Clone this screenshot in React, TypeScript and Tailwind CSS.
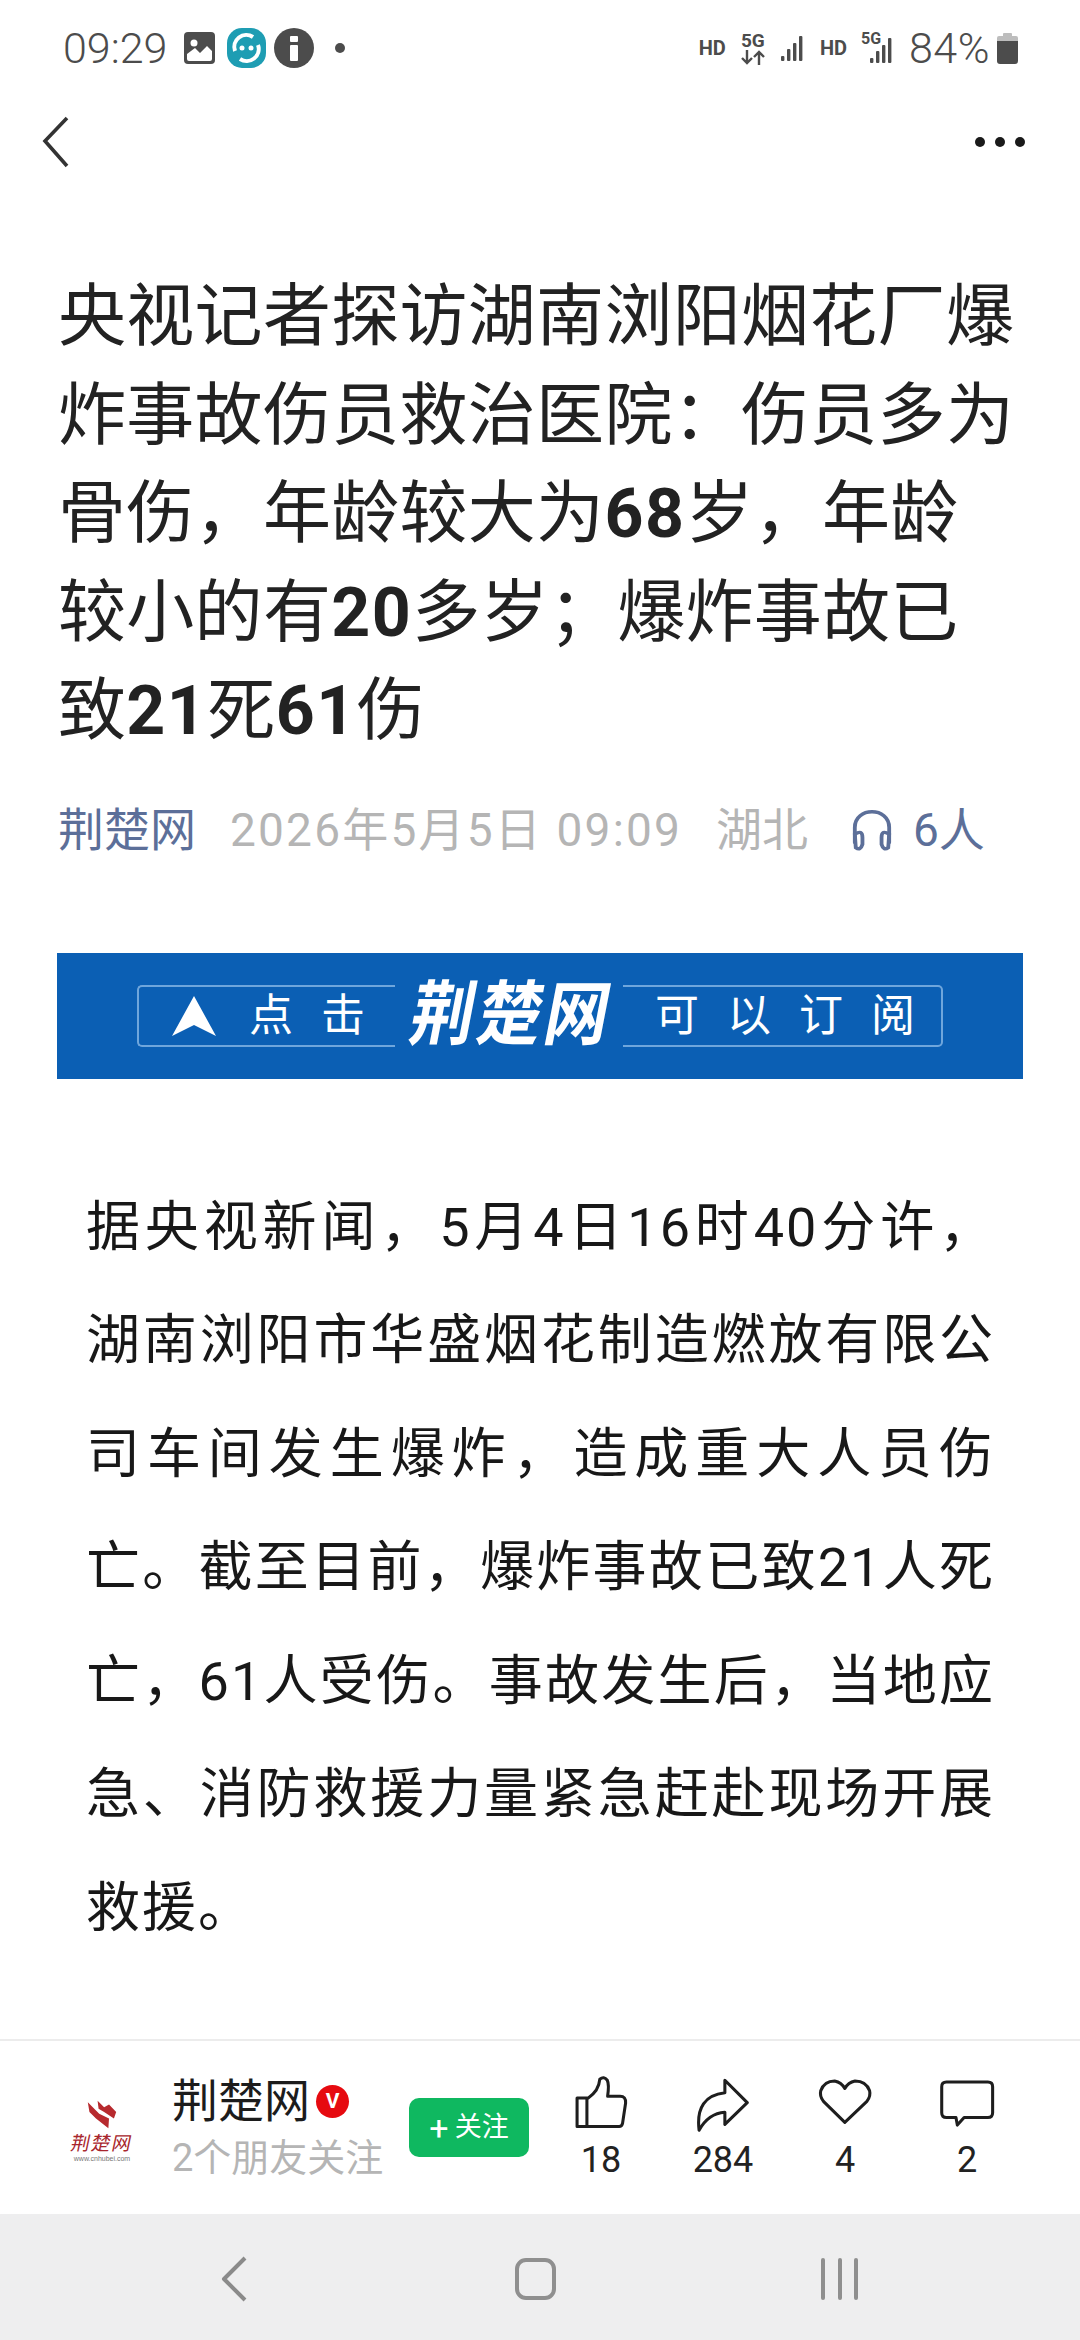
// App.tsx
const font = "font-['Roboto','Noto_Sans_CJK_SC',sans-serif]";

function SignalBars({ x = 0 }: { x?: number }) {
  const bars = [
    [0, 20, 3],
    [6, 13, 10],
    [12, 7, 16],
    [18, 0, 23],
  ];
  return (
    <svg width="27" height="26" viewBox="0 0 27 26" fill="#4c4c4c" style={{ marginLeft: x }}>
      {bars.map(([bx, by, h]) => (
        <rect key={bx} x={bx + 1} y={by + 1} width="3.4" height={h + 2} rx="1" />
      ))}
    </svg>
  );
}

function StatusBar() {
  return (
    <div className="flex h-[96px] shrink-0 items-center pl-[63px] pr-[62px] text-[#4c4c4c]">
      <span className="w-[121px] text-[43px] font-light leading-none">09:29</span>
      <svg width="31" height="32" viewBox="0 0 31 32" className="mr-[12px]">
        <rect width="31" height="32" rx="4" fill="#4c4c4c" />
        <circle cx="10" cy="11" r="3.5" fill="#fff" />
        <path d="M3 27 V22 L11 16 L16 21 L23 14 L28 19 V27 Q28 29 26 29 H5 Q3 29 3 27Z" fill="#fff" />
      </svg>
      <svg width="39" height="40" viewBox="0 0 39 40" className="mr-[8px]">
        <rect width="39" height="40" rx="15" fill="#1e9db3" />
        <path d="M8 23 A12 12 0 0 1 26 9" fill="none" stroke="#fff" strokeWidth="4" />
        <path d="M31 17 A12 12 0 0 1 13 31" fill="none" stroke="#fff" strokeWidth="4" />
        <circle cx="15" cy="20" r="2.5" fill="#fff" />
        <circle cx="24" cy="20" r="2.5" fill="#fff" />
      </svg>
      <svg width="40" height="40" viewBox="0 0 40 40">
        <circle cx="20" cy="20" r="20" fill="#4c4c4c" />
        <rect x="16" y="8" width="8" height="6" rx="1" fill="#fff" />
        <rect x="16" y="17" width="8" height="16" rx="1" fill="#fff" />
      </svg>
      <span className="ml-[21px] h-[10px] w-[10px] rounded-full bg-[#4c4c4c]" />
      <div className="ml-auto flex items-center">
        <span className="text-[20px] font-bold leading-none">HD</span>
        <div className="ml-[15px] flex w-[24px] flex-col items-center">
          <span className="text-[19px] font-bold leading-[18px]">5G</span>
          <svg width="24" height="15" viewBox="0 0 24 15" fill="none" stroke="#4c4c4c" strokeWidth="2.4">
            <path d="M6 0 V13 M1 8 L6 13 L11 8" />
            <path d="M18 15 V2 M13 7 L18 2 L23 7" />
          </svg>
        </div>
        <SignalBars x={15} />
        <span className="ml-[13px] text-[20px] font-bold leading-none">HD</span>
        <div className="relative ml-[22px] h-[30px] w-[27px]">
          <span className="absolute -left-[8px] -top-[2px] text-[16px] font-bold leading-[16px]">5G</span>
          <div className="absolute left-0 top-[4px]">
            <SignalBars />
          </div>
        </div>
        <span className="ml-[13px] text-[43px] font-light leading-none tracking-[0.5px]">84%</span>
        <div className="ml-[7px] flex h-[31px] w-[21px] flex-col items-center">
          <span className="h-[3px] w-[9px] rounded-t-[1px] bg-[#bdbdbd]" />
          <span className="h-[5px] w-full rounded-t-[2px] bg-[#bdbdbd]" />
          <span className="w-full flex-1 rounded-b-[3px] bg-[#4c4c4c]" />
        </div>
      </div>
    </div>
  );
}

function NavBar() {
  return (
    <div className="flex h-[92px] shrink-0 items-center justify-between pl-[41px] pr-[55px]">
      <svg width="30" height="52" viewBox="0 0 30 52" fill="none" stroke="#333" strokeWidth="3.6">
        <path d="M26 2 L4 25 L26 50" />
      </svg>
      <div className="flex gap-[10px]">
        <span className="h-[10px] w-[10px] rounded-full bg-[#1a1a1a]" />
        <span className="h-[10px] w-[10px] rounded-full bg-[#1a1a1a]" />
        <span className="h-[10px] w-[10px] rounded-full bg-[#1a1a1a]" />
      </div>
    </div>
  );
}

function Banner() {
  return (
    <div className="mx-[57px] mt-[93px] flex h-[126px] w-[966px] items-center justify-center bg-[#0b5fb4] text-white">
      <div className="flex h-[62px] w-[806px] items-stretch">
        <div className="flex w-[258px] items-center rounded-l-[5px] border-y-2 border-l-2 border-[#6fa6dc] pl-[33px]">
          <svg width="44" height="40" viewBox="0 0 44 40" fill="#fff" className="mr-[33px]">
            <path d="M22 0 L44 40 L22 29 L0 40 Z" />
          </svg>
          <span className="text-[44px] leading-none tracking-[28px]">点击</span>
        </div>
        <div className="flex flex-1 items-center justify-center pl-[6px] text-[64px] font-bold leading-none tracking-[3px] -skew-x-12 scale-y-110">
          荆楚网
        </div>
        <div className="flex w-[320px] items-center rounded-r-[5px] border-y-2 border-r-2 border-[#6fa6dc] pl-[32px] text-[44px] leading-none tracking-[28px]">
          <span className="whitespace-nowrap">可以订阅</span>
        </div>
      </div>
    </div>
  );
}

function ActionItem({ count, width, box, children }: { count: string; width: number; box: string; children: React.ReactNode }) {
  return (
    <div className="flex w-[122px] flex-col items-center">
      <svg width={width} height="58" viewBox={box} fill="none" stroke="#1e1e1e" strokeWidth="9" strokeLinejoin="round">
        {children}
      </svg>
      <span className="mt-[6px] text-[36px] leading-[44px] text-[#222]">{count}</span>
    </div>
  );
}

function AuthorBar() {
  return (
    <div className="flex h-[175px] shrink-0 items-center border-t-2 border-[#ececec] bg-white">
      <div className="flex w-[172px] flex-col items-center pl-[32px] pt-[6px] text-[#a8262c]">
        <svg width="32" height="31" viewBox="80 45 97 95" fill="#b72a2e">
          <path d="M85 55 L120 90 L150 105 L148 135 L110 105 L90 85 Z" />
          <path d="M115 50 L135 70 L150 62 L172 85 L165 105 L135 85 L118 75 Z" />
        </svg>
        <span className="mt-[3px] -skew-x-12 text-[19px] leading-[22px] tracking-[1.5px]">荆楚网</span>
        <span className="font-['Liberation_Sans',sans-serif] text-[7px] leading-[8px] text-[#777]">www.cnhubei.com</span>
      </div>
      <div className="flex w-[237px] flex-col">
        <div className="flex items-center">
          <span className="text-[46px] leading-[52px] text-[#1c1c1c]">荆楚网</span>
          <span className="ml-[6px] flex h-[33px] w-[33px] items-center justify-center rounded-full bg-[#e60a10] text-[21px] font-bold leading-none text-white">V</span>
        </div>
        <span className="mt-[9px] text-[38px] leading-[44px] text-[#b5b5b5]">2个朋友关注</span>
      </div>
      <div className="flex h-[59px] w-[120px] items-center justify-center gap-[6px] rounded-[10px] bg-[#0fb860] text-[27px] leading-none text-white">
        <span className="text-[34px] leading-none">+</span>
        <span>关注</span>
      </div>
      <div className="ml-[11px] flex">
        <ActionItem count="18" width={56} box="96 140 165 170">
          <path d="M141 210 H108 V294 H232 Q240 294 242 285 L251 225 Q252 205 235 205 H198 Q203 170 197 158 Q187 145 175 155 Q172 190 141 210Z M137 210 V294" />
        </ActionItem>
        <ActionItem count="284" width={56} box="450 140 165 170">
          <path d="M538 158 L604 224 L538 288 V252 Q490 255 462 305 Q450 205 538 195 Z" />
        </ActionItem>
        <ActionItem count="4" width={56} box="803 148 165 170">
          <path d="M885 290 L822 228 Q810 212 814 197 Q824 168 855 168 Q875 172 885 190 Q895 172 915 168 Q948 168 958 197 Q962 212 950 228 Z" />
        </ActionItem>
        <ActionItem count="2" width={56} box="1158 148 165 170">
          <path d="M1180 171 H1302 Q1316 171 1316 185 V262 Q1316 276 1302 276 H1232 L1212 298 L1208 276 H1180 Q1166 276 1166 262 V185 Q1166 171 1180 171Z" />
        </ActionItem>
      </div>
    </div>
  );
}

function SystemNav() {
  return (
    <div className="flex h-[126px] shrink-0 items-center bg-[#eeeeef] pt-[4px]">
      <div className="flex w-full items-center pl-[220px]">
        <svg width="28" height="46" viewBox="0 0 28 46" fill="none" stroke="#8a8a8a" strokeWidth="4">
          <path d="M25 2 L4 23 L25 44" strokeLinejoin="round" />
        </svg>
        <span className="ml-[267px] h-[42px] w-[41px] rounded-[11px] border-[4px] border-[#8f8f8f]" />
        <div className="ml-[265px] flex gap-[12.5px]">
          <span className="h-[42px] w-[4px] rounded-full bg-[#8f8f8f]" />
          <span className="h-[42px] w-[4px] rounded-full bg-[#8f8f8f]" />
          <span className="h-[42px] w-[4px] rounded-full bg-[#8f8f8f]" />
        </div>
      </div>
    </div>
  );
}

export default function App() {
  return (
    <div className={`flex h-[2340px] w-[1080px] flex-col overflow-hidden bg-white ${font}`}>
      <StatusBar />
      <NavBar />
      <main className="min-h-0 flex-1">
        <h1 className="ml-[58px] mt-[80px] w-[958px] text-[68px] font-normal leading-[98.5px] tracking-[0.3px] text-[#222]">
          央视记者探访湖南浏阳烟花厂爆炸事故伤员救治医院：伤员多为骨伤，年龄较大为<b className="font-bold tracking-[1.5px]">68</b>岁，年龄较小的有<b className="font-bold tracking-[1.5px]">20</b>多岁；爆炸事故已致<b className="font-bold tracking-[1.5px]">21</b>死<b className="font-bold tracking-[1.5px]">61</b>伤
        </h1>
        <div className="mx-[58px] mt-[39px] flex items-center text-[46px] leading-[60px] text-[#b5b5b5]">
          <span className="w-[172px] text-[#5c6f99]">荆楚网</span>
          <span className="w-[486px] tracking-[2.2px]">2026年5月5日 09:09</span>
          <span className="w-[135px]">湖北</span>
          <svg width="42" height="42" viewBox="0 0 44 50" fill="none" stroke="#5c6f99" strokeWidth="4" strokeLinecap="round" preserveAspectRatio="none">
            <path d="M4 40 V22 C4 -3 40 -3 40 22 V40" />
            <path d="M4 30 Q12 24 12 34 V42 Q10 50 5 46 Z" />
            <path d="M40 30 Q32 24 32 34 V42 Q34 50 39 46 Z" />
          </svg>
          <span className="ml-[20px] text-[#5c6f99]">6人</span>
        </div>
        <Banner />
        <p className="ml-[86px] mt-[92px] w-[909px] text-justify text-[54px] font-normal leading-[113.5px] tracking-[2px] text-[#181818]">
          据央视新闻，5月4日16时40分许，湖南浏阳市华盛烟花制造燃放有限公司车间发生爆炸，造成重大人员伤亡。截至目前，爆炸事故已致21人死亡，61人受伤。事故发生后，当地应急、消防救援力量紧急赶赴现场开展救援。
        </p>
      </main>
      <AuthorBar />
      <SystemNav />
    </div>
  );
}
